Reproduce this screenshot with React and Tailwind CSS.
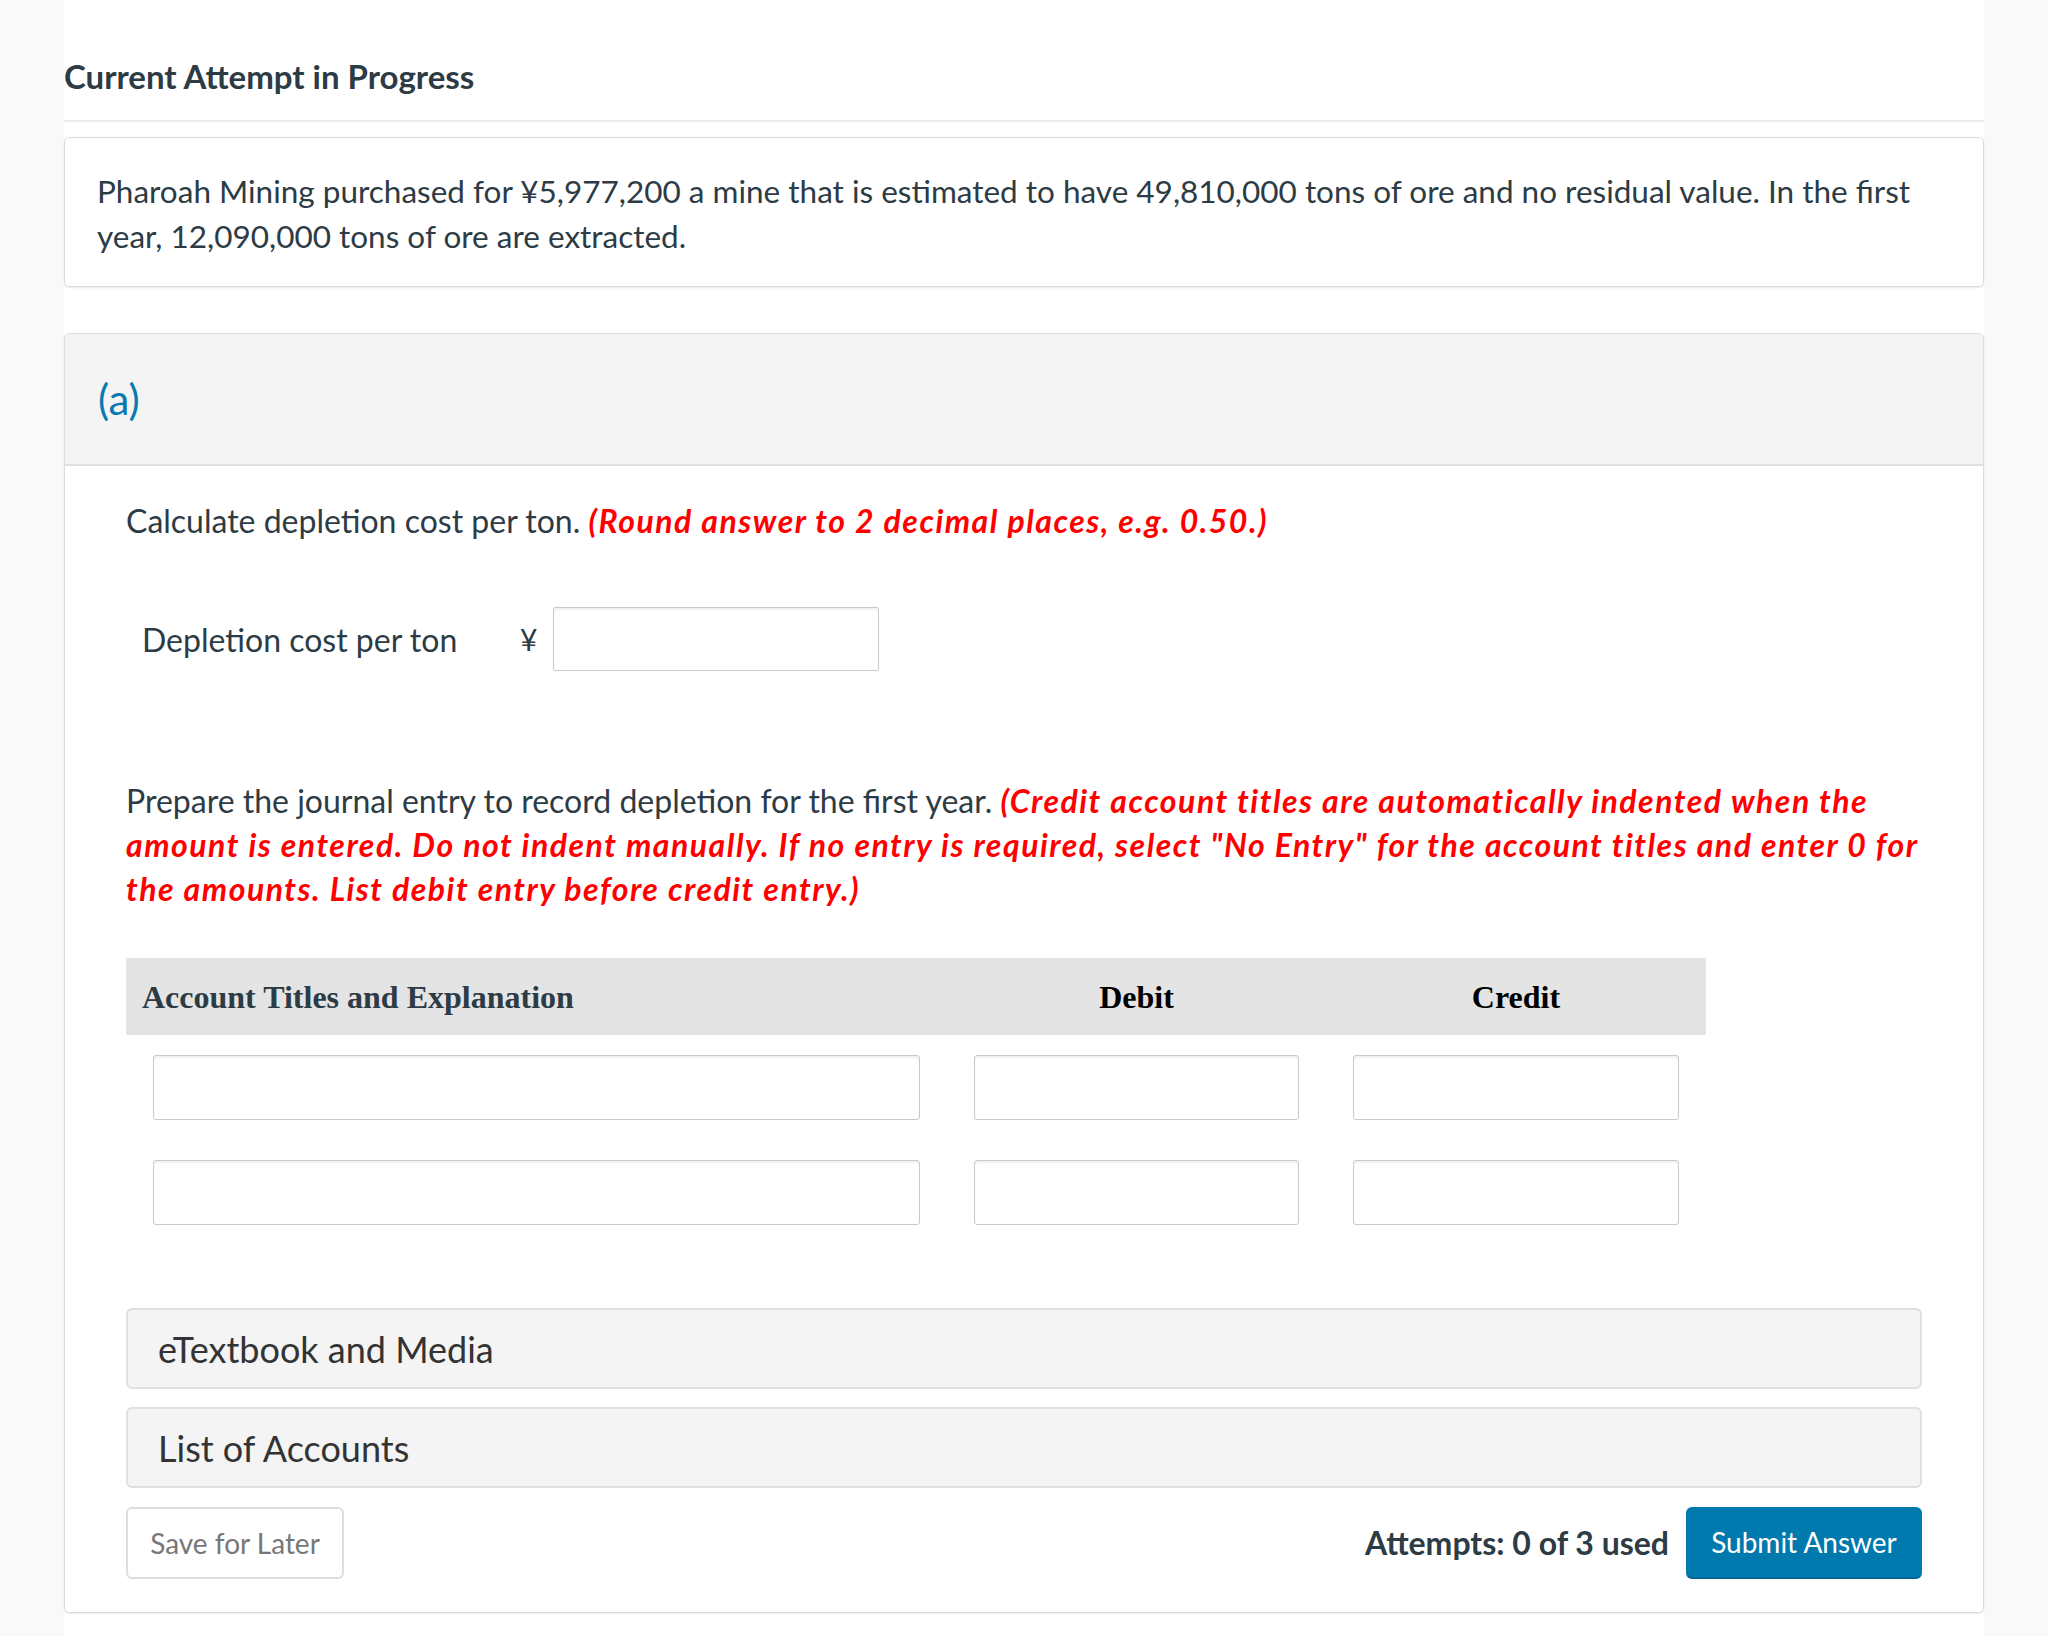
import React from "react";

const Input = ({ className = "" }) => (
  <div
    className={`h-[65px] rounded-[3px] border border-[#c9c9c9] bg-white shadow-[inset_0_2px_2px_rgba(0,0,0,0.06)] ${className}`}
  />
);

export default function App() {
  return (
    <div className="min-h-[1636px] w-full bg-[#f9f9f9] font-[Lato,sans-serif] text-[#2d3b45]">
      <div className="mx-[64px] min-h-[1636px] bg-white">
        {/* Heading */}
        <div className="pt-[57px]">
          <h1 className="text-[33px] font-bold leading-[38px]">Current Attempt in Progress</h1>
        </div>
        <div className="mt-[25px] h-[2px] bg-[#ececec]" />

        {/* Problem statement */}
        <div className="mt-[15px] rounded-[5px] border border-[#dcdcdc] pl-[32px] pr-[32px] pt-[31px] pb-[27px] shadow-[0_1px_2px_rgba(0,0,0,0.08)]">
          <p className="text-[31.5px] leading-[45px]">
            Pharoah Mining purchased for ¥5,977,200 a mine that is estimated to have 49,810,000 tons of ore and no residual value. In the first year, 12,090,000 tons of ore are extracted.
          </p>
        </div>

        {/* Part (a) */}
        <div className="mt-[46px] overflow-hidden rounded-[5px] border border-[#dcdcdc] shadow-[0_1px_2px_rgba(0,0,0,0.08)]">
          <div className="flex h-[132px] items-center border-b-2 border-[#e0e0e0] bg-[#f4f4f4] pl-[33px]">
            <span className="text-[42px] leading-none text-[#0a79b2]">(a)</span>
          </div>

          <div className="pl-[61px] pr-[61px] pt-[32px] pb-[33px]">
            <p className="text-[32px] leading-[45px]">
              Calculate depletion cost per ton.{" "}
              <span className="font-bold italic tracking-[1.5px] text-[#ff0000]">(Round answer to 2 decimal places, e.g. 0.50.)</span>
            </p>

            <div className="mt-[64px] flex items-center pl-[16px]">
              <div className="w-[378px]">
                <span className="text-[32px] leading-[45px]">Depletion cost per ton</span>
              </div>
              <div className="w-[17px] text-[30px] leading-[45px]">¥</div>
              <div className="ml-[16px] h-[64px] w-[326px] rounded-[2px] border border-[#c9c9c9] bg-white shadow-[inset_0_2px_2px_rgba(0,0,0,0.06)]" />
            </div>

            <p className="mt-[108px] text-[32px] leading-[44px]">
              Prepare the journal entry to record depletion for the first year.{" "}
              <span className="font-bold italic tracking-[1.5px] text-[#ff0000]">
                (Credit account titles are automatically indented when the amount is entered. Do not indent manually. If no entry is required, select "No Entry" for the account titles and enter 0 for the amounts. List debit entry before credit entry.)
              </span>
            </p>

            {/* Journal table */}
            <div className="mt-[47px] w-[1580px]">
              <div className="grid h-[77px] grid-cols-[821px_379px_380px] items-center bg-[#e4e4e4] font-['Liberation_Serif',serif] text-[32px] font-bold">
                <div className="pl-[16px] text-[#2d3b45]">Account Titles and Explanation</div>
                <div className="text-center text-black">Debit</div>
                <div className="text-center text-black">Credit</div>
              </div>
              {[0, 1].map((i) => (
                <div key={i} className="grid grid-cols-[821px_379px_380px] py-[20px]">
                  <div className="px-[27px]">
                    <Input />
                  </div>
                  <div className="px-[27px]">
                    <Input />
                  </div>
                  <div className="px-[27px]">
                    <Input />
                  </div>
                </div>
              ))}
            </div>

            {/* Accordions */}
            <div className="mt-[63px] flex h-[81px] items-center rounded-[6px] border-2 border-[#e0e0e0] bg-[#f4f4f4] pl-[30px] text-[36px] text-[#333333]">
              eTextbook and Media
            </div>
            <div className="mt-[18px] flex h-[81px] items-center rounded-[6px] border-2 border-[#e0e0e0] bg-[#f4f4f4] pl-[30px] text-[36px] text-[#333333]">
              List of Accounts
            </div>

            {/* Buttons */}
            <div className="mt-[19px] flex items-center justify-between">
              <button className="flex h-[72px] w-[218px] items-center justify-center rounded-[6px] border-2 border-[#dedede] bg-white text-[28px] text-[#777777]">
                Save for Later
              </button>
              <div className="flex items-center gap-[17px]">
                <span className="text-[32px] font-bold">Attempts: 0 of 3 used</span>
                <button className="flex h-[72px] w-[236px] items-center justify-center rounded-[6px] border-b-2 border-[#00659a] bg-[#0079ae] text-[28px] text-white">
                  Submit Answer
                </button>
              </div>
            </div>
          </div>
        </div>
      </div>
    </div>
  );
}
